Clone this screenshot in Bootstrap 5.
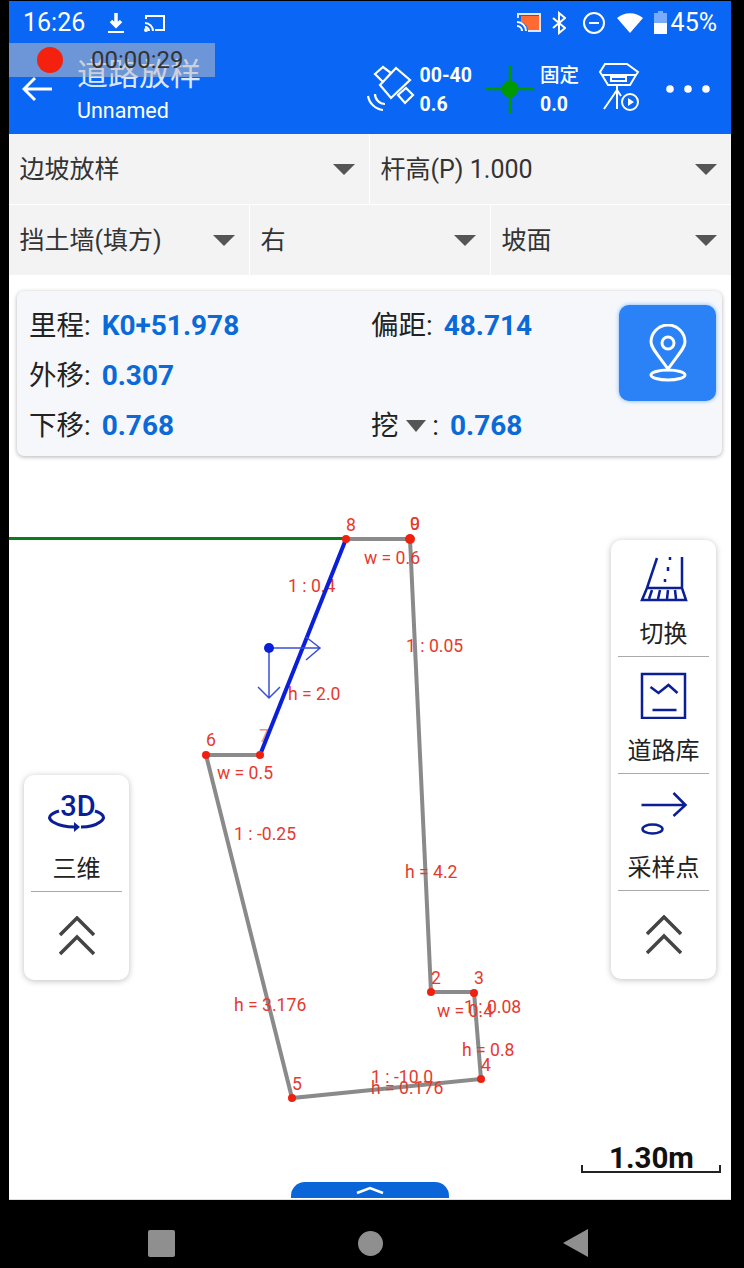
<!DOCTYPE html>
<html lang="zh">
<head>
    <meta charset="UTF-8">
    <meta name="viewport" content="width=device-width, initial-scale=1.0">
    <title>道路放样</title>
    <link href="https://cdn.jsdelivr.net/npm/bootstrap@5.3.0/dist/css/bootstrap.min.css" rel="stylesheet">
    <style>
        html, body { height: 100%; }
        body { background: #000; font-family: Roboto, "Noto Sans CJK SC", sans-serif; overflow: hidden; }
        .phone { width: 744px; height: 1268px; padding: 1px 13px 0 9px; }
        .screen { height: 1199px; background: #fff; position: relative; border-bottom: 1px solid #ddd; }

        /* header */
        .app-head { background: #0a66f5; color: #fff; height: 133px; position: relative; }
        .status-row { height: 43px; padding: 0 14px; font-size: 25px; line-height: 1; }
        .dl-icon { margin-left: 21px; }
        .cast-icon { margin-left: 18px; }
        .st-gap { margin-left: 10px; }
        .tool-row { height: 89px; padding-left: 13px; padding-right: 21px; }
        .title-box { margin-left: 24px; margin-top: 3px; }
        .title-main { font-size: 31px; line-height: 40px; opacity: .85; }
        .title-sub { font-size: 21.5px; line-height: 28px; margin-top: 2px; }
        .stat-box { font-size: 19.5px; font-weight: 700; line-height: 29px; padding-top: 2px; }
        .stat-cn { font-weight: 500; }
        .stat-gap { margin-left: 3px; }
        .cross-icon { margin: 0 6px 0 14px; }
        .rover-icon { margin: 0 24px 0 17px; }
        .rec-bar { position: absolute; left: 0; top: 42px; width: 206px; height: 34px; background: rgba(190, 190, 190, .55); }
        .rec-dot { position: absolute; left: 28px; top: 4px; width: 26px; height: 26px; border-radius: 50%; background: #f5210f; }
        .rec-time { position: absolute; left: 82px; top: 3px; font-size: 24px; color: #333; line-height: 28px; }

        /* option selects */
        .opt-row { height: 70px; gap: 1px; margin-bottom: 1px; }
        .opt-cell { background: #f3f3f3; font-size: 25px; color: #333; padding: 1px 14px 0 10.5px; }
        .opt-first { flex: 0 0 360px; }
        .opt-caret { width: 0; height: 0; border-left: 11px solid transparent; border-right: 11px solid transparent; border-top: 11px solid #555; }

        /* info card */
        .info-card { margin: 16px 9px 0 8px; height: 165px; background: #f5f7fb; border-radius: 7px; box-shadow: 0 1px 4px rgba(0, 0, 0, .3); padding: 10px 6px 0 12px; }
        .info-line { height: 50px; font-size: 27.5px; color: #222; }
        .info-half { width: 342px; }
        .val { color: #0a6ad8; font-weight: 700; font-size: 28px; margin-left: 11px; }
        .mini-caret { display: inline-block; width: 0; height: 0; border-left: 10px solid transparent; border-right: 10px solid transparent; border-top: 12px solid #555; margin: 0 0 3px 7px; }
        .pin-btn { width: 97px; height: 96px; margin-top: 4px; background: #2a82f6; border-radius: 10px; box-shadow: 0 0 4px rgba(42, 130, 246, .6); }

        /* drawing */
        .draw-layer { position: absolute; left: 0; top: 0; width: 722px; height: 1199px; }
        .draw-layer text { font-family: Roboto, sans-serif; font-size: 17.6px; fill: #e53a2e; }
        .draw-layer .faint-mark { opacity: .55; }
        .draw-layer .scale-text { font-size: 29.5px; font-weight: 700; fill: #111; }

        /* floating panels */
        .side-panel { position: absolute; width: 105px; background: #fff; border-radius: 10px; box-shadow: 0 1px 6px rgba(0, 0, 0, .25); }
        .panel-right { left: 602px; top: 539px; }
        .panel-left { left: 15px; top: 774px; }
        .panel-item { height: 117px; margin: 0 7px; border-bottom: 1px solid #aaa; font-size: 24px; line-height: 36px; color: #222; padding-top: 12px; }
        .panel-item svg { display: block; height: 50px; margin: 0 auto 14px; }
        .panel-more { height: 88px; }
        .tab-up { position: absolute; left: 282px; bottom: 1px; width: 158px; height: 16px; background: #0a66d8; border-radius: 14px 14px 0 0; }

        /* android nav */
        .nav-keys { height: 68px; }
        .key-square { position: absolute; left: 148px; top: 1230px; width: 27px; height: 27px; background: #8f8f8f; border-radius: 2px; }
        .key-round { position: absolute; left: 358px; top: 1231px; width: 25px; height: 25px; background: #8f8f8f; border-radius: 50%; }
        .key-back { position: absolute; left: 563px; top: 1229px; width: 0; height: 0; border-top: 14px solid transparent; border-bottom: 14px solid transparent; border-right: 25px solid #8f8f8f; }
    </style>
</head>
<body>
<div class="phone">
    <div class="screen">
        <!-- header -->
        <div class="app-head">
            <div class="status-row d-flex align-items-center">
                <span>16:26</span>
                <svg class="dl-icon" width="20" height="24" viewBox="0 0 20 24" fill="none" stroke="#fff"><path d="M10 2v12M5 10l5 5 5-5" stroke-width="3.5"/><path d="M2 21h16" stroke-width="2"/></svg>
                <svg class="cast-icon" width="22" height="18" viewBox="0 0 22 18" fill="none" stroke="#fff" stroke-width="2"><path d="M2 5V2h18v14h-9"/><path d="M1 9a8 8 0 0 1 8 8M1 13a4 4 0 0 1 4 4"/><circle cx="2" cy="16" r="1" fill="#fff"/></svg>
                <svg class="ms-auto" width="26" height="20" viewBox="0 0 26 20"><path d="M5 3h18v15H12a10 10 0 0 0-7-9z" fill="#ff6a33"/><path d="M2 5V1h22v17H12" fill="none" stroke="#dfe6f5" stroke-width="2"/><path d="M1 9a9 9 0 0 1 9 9M1 13a5 5 0 0 1 5 5" fill="none" stroke="#fff" stroke-width="2"/></svg>
                <svg class="st-gap" width="14" height="24" viewBox="0 0 14 24" fill="none" stroke="#fff" stroke-width="2"><path d="M1 7l12 10-6 5V2l6 5L1 17"/></svg>
                <svg class="ms-3" width="24" height="24" viewBox="0 0 24 24" fill="none" stroke="#fff" stroke-width="2"><circle cx="12" cy="12" r="10"/><path d="M7 12h10"/></svg>
                <svg class="st-gap" width="28" height="20" viewBox="0 0 28 20" fill="#fff"><path d="M1 5a20 20 0 0 1 26 0L14 20z"/></svg>
                <svg class="st-gap" width="13" height="23" viewBox="0 0 13 23"><path d="M4 0h5v2h4v21H0V2h4z" fill="#fff" opacity=".45"/><path d="M0 12h13v11H0z" fill="#fff"/></svg>
                <span class="ms-1">45%</span>
            </div>
            <div class="tool-row d-flex align-items-center">
                <svg width="31" height="26" viewBox="0 0 31 26" fill="none" stroke="#fff" stroke-width="3"><path d="M30 13H3M13 2L2 13l11 11"/></svg>
                <div class="title-box">
                    <div class="title-main">道路放样</div>
                    <div class="title-sub">Unnamed</div>
                </div>
                <!-- satellite -->
                <svg class="ms-auto" width="50" height="48" viewBox="4 5 50 48" fill="none" stroke="#fff" stroke-width="2.2"><path d="M33 8L47 20 28 38 17 25zM12 14l8-7 8 6-8 9zM35 35l8-7 7 7-8 8z"/><path d="M5 36a17 17 0 0 0 15 14M12 34a10 10 0 0 0 10 10"/></svg>
                <div class="stat-box stat-gap">
                    <div>00-40</div>
                    <div>0.6</div>
                </div>
                <svg class="cross-icon" width="48" height="48" viewBox="0 0 48 48" fill="none" stroke="#090"><path d="M0 24h48M24 0v48" stroke-width="2.5"/><circle cx="24" cy="24" r="8" fill="#090"/></svg>
                <div class="stat-box">
                    <div class="stat-cn">固定</div>
                    <div>0.0</div>
                </div>
                <!-- rover on tripod -->
                <svg class="rover-icon" width="46" height="54" viewBox="4 4 46 54" fill="none" stroke="#fff" stroke-width="2"><path d="M13 6h22l11 8-2 3H10l-2-3zM10 17l6 10h22l6-10M19 19h15v4H19zM25 27v5M25 32L12 51M25 32v19M25 32l4 6"/><circle cx="38" cy="44" r="8"/><path d="M36 40l6 4-6 4z" fill="#fff" stroke="none"/></svg>
                <svg width="44" height="8" viewBox="0 0 44 8" fill="#fff"><circle cx="4" cy="4" r="3.8"/><circle cx="22" cy="4" r="3.8"/><circle cx="40" cy="4" r="3.8"/></svg>
            </div>
            <div class="rec-bar">
                <span class="rec-dot"></span>
                <span class="rec-time">00:00:29</span>
            </div>
        </div>

        <!-- option selects -->
        <div class="opt-row d-flex">
            <div class="opt-cell opt-first d-flex align-items-center justify-content-between"><span>边坡放样</span><span class="opt-caret"></span></div>
            <div class="opt-cell flex-fill d-flex align-items-center justify-content-between"><span>杆高(P) 1.000</span><span class="opt-caret"></span></div>
        </div>
        <div class="opt-row d-flex">
            <div class="opt-cell d-flex align-items-center justify-content-between w-100"><span>挡土墙(填方)</span><span class="opt-caret"></span></div>
            <div class="opt-cell d-flex align-items-center justify-content-between w-100"><span>右</span><span class="opt-caret"></span></div>
            <div class="opt-cell d-flex align-items-center justify-content-between w-100"><span>坡面</span><span class="opt-caret"></span></div>
        </div>

        <!-- stakeout readout -->
        <div class="info-card d-flex">
            <div class="flex-grow-1">
                <div class="info-line d-flex align-items-center">
                    <div class="info-half">里程:<span class="val">K0+51.978</span></div>
                    <div>偏距:<span class="val">48.714</span></div>
                </div>
                <div class="info-line d-flex align-items-center">
                    <div class="info-half">外移:<span class="val">0.307</span></div>
                </div>
                <div class="info-line d-flex align-items-center">
                    <div class="info-half">下移:<span class="val">0.768</span></div>
                    <div>挖<span class="mini-caret"></span> :<span class="val">0.768</span></div>
                </div>
            </div>
            <div class="pin-btn d-flex align-items-center justify-content-center">
                <svg width="40" height="58" viewBox="0 0 40 58" fill="none" stroke="#fff" stroke-width="3"><path d="M20 45C11 32 3 24 3 18a17 17 0 0 1 34 0c0 6-8 14-17 27z"/><circle cx="20" cy="19" r="6"/><ellipse cx="20" cy="51" rx="17" ry="5"/></svg>
            </div>
        </div>

        <!-- section drawing, page coordinates minus the 9px/1px phone offset -->
        <svg class="draw-layer" viewBox="9 1 722 1199">
            <path d="M9 538.5H346" stroke="#0a7d1a" stroke-width="3"/>
            <path d="M346 539H410L431 992H474L481 1079L292 1098L206 755H260" fill="none" stroke="#8a8a8a" stroke-width="4"/>
            <text x="346" y="531">8</text>
            <text x="410" y="530">0</text>
            <text x="410" y="530">9</text>
            <text x="364" y="564">w = 0.6</text>
            <text x="288" y="592">1 : 0.4</text>
            <text x="406" y="652">1 : 0.05</text>
            <text x="288" y="700">h = 2.0</text>
            <text x="206" y="746">6</text>
            <text class="faint-mark" x="259" y="742">7</text>
            <text x="217" y="779">w = 0.5</text>
            <text x="234" y="840">1 : -0.25</text>
            <text x="405" y="878">h = 4.2</text>
            <text x="234" y="1011">h = 3.176</text>
            <text x="431" y="984">2</text>
            <text x="474" y="984">3</text>
            <text x="437" y="1017">w = 0.4</text>
            <text x="464" y="1013">1 : 0.08</text>
            <text x="462" y="1056">h = 0.8</text>
            <text x="481" y="1071">4</text>
            <text x="292" y="1090">5</text>
            <text x="371" y="1083">1 : -10.0</text>
            <text x="371" y="1094">h = 0.176</text>
            <path d="M260 755L346 539" stroke="#0a1fd8" stroke-width="4"/>
            <path d="M269 648H319M306 637L320 648L306 660M269 648V698M258 687L269 698L280 687" fill="none" stroke="#3a4fd8" stroke-width="1.5"/>
            <circle cx="269" cy="648" r="5" fill="#0a1fd8"/>
            <g fill="#f02010">
                <circle cx="346" cy="539" r="4"/><circle cx="410" cy="539" r="5"/><circle cx="431" cy="992" r="4"/><circle cx="474" cy="993" r="4"/>
                <circle cx="481" cy="1079" r="4"/><circle cx="292" cy="1098" r="4"/><circle cx="206" cy="755" r="4"/><circle cx="260" cy="755" r="4"/>
            </g>
            <text class="scale-text" x="609" y="1168">1.30m</text>
            <path d="M582 1165V1172H720V1165" fill="none" stroke="#222" stroke-width="2"/>
        </svg>

        <!-- right tool panel -->
        <div class="side-panel panel-right text-center">
            <div class="panel-item">
                <svg viewBox="6 4 52 50" width="52" fill="none" stroke="#0a1f96" stroke-width="2.5"><path d="M25 10L15 40M50 9v31M15 40h35l4 12H10zM38 9v3M36 19v4M33 31v3"/><path d="M20 42l-3 9M28 42l-2 9M36 42l-1 9M43 42l1 9"/></svg>
                <div>切换</div>
            </div>
            <div class="panel-item">
                <svg viewBox="0 0 50 50" width="50" fill="none" stroke="#0a1f96" stroke-width="2.5"><rect x="3" y="5" width="43" height="44"/><path d="M11.5 18l8 6 10-8 9 8M13.5 41h24"/></svg>
                <div>道路库</div>
            </div>
            <div class="panel-item">
                <svg viewBox="0 0 50 50" width="50" fill="none" stroke="#0a1f96" stroke-width="2.5"><path d="M2.5 19h44M34.5 7l12 12-12 11"/><ellipse cx="13.5" cy="43" rx="10" ry="4.5"/></svg>
                <div>采样点</div>
            </div>
            <div class="panel-more d-flex align-items-center justify-content-center">
                <svg width="36" height="40" viewBox="0 0 36 40" fill="none" stroke="#444" stroke-width="3.5"><path d="M1 19L18 2l17 17M1 38l17-17 17 17"/></svg>
            </div>
        </div>

        <!-- left tool panel -->
        <div class="side-panel panel-left text-center">
            <div class="panel-item">
                <svg viewBox="0 -1 72 50" width="72" fill="none" stroke="#0a1f96"><text x="37" y="28" text-anchor="middle" font-family="Roboto, sans-serif" font-size="29" font-weight="500" fill="#0a1f96" stroke="none">3D</text><path d="M18 23C8 26 6 30 12 34C17 37 25 39 34 39M54 23c9 3 11 7 5 11C55 37 48 39 40 39" stroke-width="3"/><path d="M33 34l6 5-6 5z" fill="#0a1f96" stroke="none"/></svg>
                <div>三维</div>
            </div>
            <div class="panel-more d-flex align-items-center justify-content-center">
                <svg width="36" height="40" viewBox="0 0 36 40" fill="none" stroke="#444" stroke-width="3.5"><path d="M1 19L18 2l17 17M1 38l17-17 17 17"/></svg>
            </div>
        </div>

        <div class="tab-up d-flex align-items-center justify-content-center">
            <svg width="30" height="10" viewBox="0 0 30 10" fill="none" stroke="#fff" stroke-width="2.5"><path d="M2 8l13-5 13 5"/></svg>
        </div>
    </div>

    <!-- android keys -->
    <div class="nav-keys">
        <span class="key-square"></span>
        <span class="key-round"></span>
        <span class="key-back"></span>
    </div>
</div>
<script src="https://cdn.jsdelivr.net/npm/bootstrap@5.3.0/dist/js/bootstrap.bundle.min.js"></script>
</body>
</html>
